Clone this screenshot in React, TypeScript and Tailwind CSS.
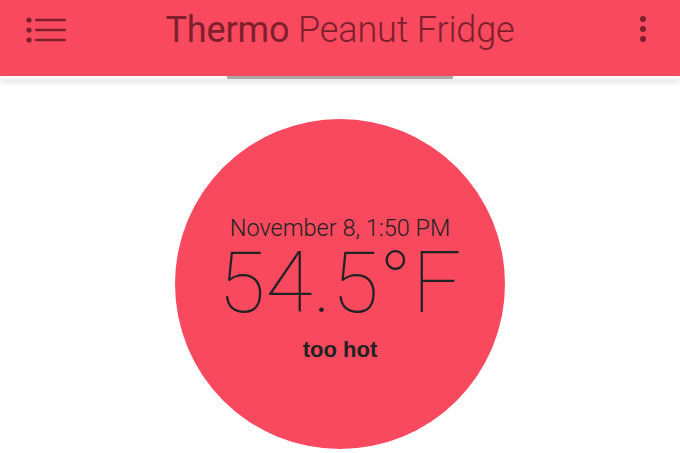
import React from 'react';

const ACCENT = '#f9495f';

const MenuIcon = () => (
  <svg width="46" height="30" viewBox="0 0 46 30" className="ml-[24px] mt-[15px]">
    {[5, 15, 25].map((y) => (
      <g key={y}>
        <circle cx="5" cy={y} r="2.6" fill="#7d1f2d" />
        <rect x="11" y={y - 1.3} width="31" height="2.6" rx="1.3" fill="#7d1f2d" />
      </g>
    ))}
  </svg>
);

const MoreIcon = () => (
  <svg width="12" height="30" viewBox="0 0 12 30" className="mr-[31px] mt-[14px] justify-self-end">
    {[5, 15, 25].map((y) => (
      <circle key={y} cx="6" cy={y} r="3" fill="#7d1f2d" />
    ))}
  </svg>
);

export default function App() {
  return (
    <div className="w-[680px] h-[453px] bg-white overflow-hidden" style={{ fontFamily: 'Roboto, "Liberation Sans", sans-serif' }}>
      {/* top bar */}
      <header className="grid grid-cols-[1fr_auto_1fr] items-start h-[76px] bg-[#f9495f]">
        <MenuIcon />
        <h1 className="mt-[12px] text-[36px] leading-[36px] tracking-[-0.15px] text-[#7d1f2d] whitespace-nowrap">
          <span className="font-normal">Thermo</span> <span className="font-light">Peanut Fridge</span>
        </h1>
        <MoreIcon />
      </header>
      {/* tab indicator strip */}
      <div className="h-[3px] bg-white shadow-[0_3px_5px_rgba(0,0,0,0.16)]">
        <div className="mx-auto w-[226px] h-[3px] bg-[#a9a9a9]" />
      </div>

      {/* reading */}
      <div className="flex justify-center pt-[40px]">
        <div
          className="w-[330px] h-[330px] rounded-full flex flex-col items-center pt-[96px] text-[#222]"
          style={{ backgroundColor: ACCENT }}
        >
          <div className="text-[23.5px] leading-[26px] font-light whitespace-nowrap">November 8, 1:50 PM</div>
          <div className="text-[86px] leading-[84px] font-thin tracking-[0.3px] whitespace-nowrap">54.5°F</div>
          <div className="mt-[12px] text-[22px] leading-[26px] font-bold whitespace-nowrap" style={{ fontFamily: '"Liberation Sans", sans-serif' }}>
            too hot
          </div>
        </div>
      </div>
    </div>
  );
}
